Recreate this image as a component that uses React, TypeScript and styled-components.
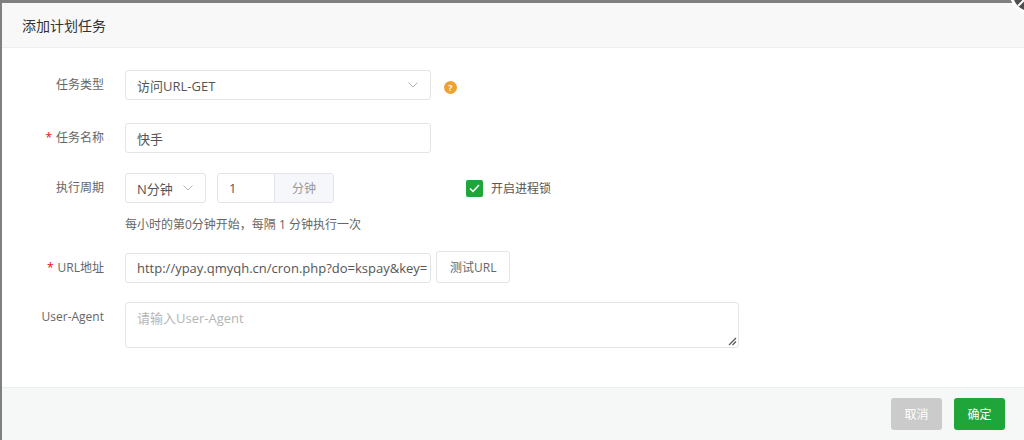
import styled, { createGlobalStyle } from "styled-components";

const GlobalStyle = createGlobalStyle`
  html, body {
    margin: 0;
    padding: 0;
    width: 1024px;
    height: 440px;
    overflow: hidden;
    background: #808080;
    font-family: "Open Sans", "Noto Sans CJK SC", sans-serif;
  }
`;

const Overlay = styled.div`
  position: relative;
  width: 1024px;
  height: 440px;
  padding: 3px 0 0 2px;
  box-sizing: border-box;
  background: #808080;
  overflow: hidden;
`;

const Dialog = styled.div`
  display: flex;
  flex-direction: column;
  height: 100%;
  background: #fff;
`;

const Header = styled.div`
  height: 44px;
  flex: none;
  display: flex;
  align-items: center;
  padding-left: 20px;
  background: #f8f8f8;
  border-bottom: 1px solid #eee;
  font-size: 14px;
  color: #333;
`;

const CloseButton = styled.div`
  position: absolute;
  z-index: 5;
  left: 1010px;
  top: -26px;
  width: 34px;
  height: 34px;
  border-radius: 50%;
  background: #4f4f4f;
  border: 3px solid #fff;
  svg {
    position: absolute;
    left: 4px;
    bottom: 4px;
  }
`;

const Body = styled.div`
  flex: 1;
  padding-top: 22px;
  display: flex;
  flex-direction: column;
`;

const Row = styled.div<{ $gap?: number }>`
  display: flex;
  align-items: flex-start;
  margin-bottom: ${(p) => p.$gap ?? 20}px;
`;

const Label = styled.div`
  width: 102px;
  flex: none;
  text-align: right;
  line-height: 30px;
  font-size: 12px;
  color: #666;
  margin-right: 21px;
`;

const Star = styled.span`
  color: #ef0808;
  margin-right: 4px;
`;

const Field = styled.div`
  display: flex;
  align-items: center;
`;

const Input = styled.div<{ $width: number }>`
  width: ${(p) => p.$width}px;
  height: 30px;
  box-sizing: border-box;
  border: 1px solid #e2e4e8;
  border-radius: 3px;
  padding: 0 11px;
  display: flex;
  align-items: center;
  font-size: 13px;
  color: #555;
  white-space: nowrap;
  overflow: hidden;
`;

const Select = styled(Input)`
  justify-content: space-between;
  padding-right: 12px;
`;

const Chevron = () => (
  <svg width="10" height="6" viewBox="0 0 10 6">
    <path d="M0.5 0.5 L5 5 L9.5 0.5" fill="none" stroke="#b0b3b8" strokeWidth="1" />
  </svg>
);

const Help = styled.div`
  width: 13px;
  height: 13px;
  border-radius: 50%;
  background: #f0a030;
  color: #fff;
  font-size: 9px;
  font-weight: 700;
  line-height: 13px;
  text-align: center;
  margin-left: 13px;
  margin-top: 11px;
`;

const Group = styled.div`
  display: flex;
  height: 30px;
  margin-left: 11px;
  border: 1px solid #e2e4e8;
  border-radius: 3px;
  overflow: hidden;
  box-sizing: border-box;
`;

const GroupInput = styled.div`
  width: 34px;
  padding: 0 11px;
  display: flex;
  align-items: center;
  font-size: 13px;
  color: #555;
`;

const Addon = styled.div`
  width: 58px;
  display: flex;
  align-items: center;
  justify-content: center;
  background: #f5f7fa;
  border-left: 1px solid #e2e4e8;
  font-size: 12px;
  color: #999;
`;

const CheckWrap = styled.label`
  display: flex;
  align-items: center;
  margin-left: 132px;
  font-size: 12px;
  color: #555;
  gap: 8px;
`;

const CheckBox = styled.span`
  width: 17px;
  height: 17px;
  border-radius: 2px;
  background: #20a53a;
  display: flex;
  align-items: center;
  justify-content: center;
`;

const Hint = styled.div`
  margin: 13px 0 19px 123px;
  font-size: 12px;
  color: #666;
  line-height: 18px;
`;

const Button = styled.div`
  height: 32px;
  margin-left: 5px;
  margin-top: -2px;
  padding: 0 13px;
  box-sizing: border-box;
  border: 1px solid #e2e4e8;
  border-radius: 3px;
  display: flex;
  align-items: center;
  font-size: 12px;
  color: #666;
`;

const TextArea = styled.div`
  width: 614px;
  height: 46px;
  box-sizing: border-box;
  border: 1px solid #e2e4e8;
  border-radius: 3px;
  padding: 5px 11px;
  font-size: 13px;
  color: #b5b5b5;
  position: relative;
  svg {
    position: absolute;
    right: 1px;
    bottom: 1px;
  }
`;

const Footer = styled.div`
  height: 52px;
  flex: none;
  display: flex;
  justify-content: flex-end;
  align-items: center;
  gap: 12px;
  padding-right: 19px;
  background: #f6f7f7;
  border-top: 1px solid #eceeee;
`;

const FooterButton = styled.div<{ $primary?: boolean }>`
  width: 51px;
  height: 32px;
  border-radius: 3px;
  display: flex;
  align-items: center;
  justify-content: center;
  font-size: 12px;
  color: #fff;
  background: ${(p) => (p.$primary ? "#20a53a" : "#cbcbcb")};
`;

export default function App() {
  return (
    <>
      <GlobalStyle />
      <Overlay>
        <Dialog>
          <Header>添加计划任务</Header>
          <Body>
            <Row $gap={23}>
              <Label>任务类型</Label>
              <Field>
                <Select $width={306}>
                  访问URL-GET
                  <Chevron />
                </Select>
              </Field>
              <Help>?</Help>
            </Row>
            <Row>
              <Label>
                <Star>*</Star>任务名称
              </Label>
              <Input $width={306}>快手</Input>
            </Row>
            <Row $gap={0}>
              <Label>执行周期</Label>
              <Field>
                <Select $width={81}>
                  N分钟
                  <Chevron />
                </Select>
                <Group>
                  <GroupInput>1</GroupInput>
                  <Addon>分钟</Addon>
                </Group>
                <CheckWrap>
                  <CheckBox>
                    <svg width="11" height="9" viewBox="0 0 11 9">
                      <path d="M1 4.5 L4 7.5 L10 1" fill="none" stroke="#fff" strokeWidth="1.5" />
                    </svg>
                  </CheckBox>
                  开启进程锁
                </CheckWrap>
              </Field>
            </Row>
            <Hint>每小时的第0分钟开始，每隔 1 分钟执行一次</Hint>
            <Row $gap={19}>
              <Label>
                <Star>*</Star>URL地址
              </Label>
              <Input $width={306}>http://ypay.qmyqh.cn/cron.php?do=kspay&amp;key=</Input>
              <Button>测试URL</Button>
            </Row>
            <Row>
              <Label>User-Agent</Label>
              <TextArea>
                请输入User-Agent
                <svg width="10" height="10" viewBox="0 0 10 10">
                  <path d="M9 2 L2 9 M9 5.5 L5.5 9" stroke="#555" strokeWidth="1.2" />
                </svg>
              </TextArea>
            </Row>
          </Body>
          <Footer>
            <FooterButton>取消</FooterButton>
            <FooterButton $primary>确定</FooterButton>
          </Footer>
        </Dialog>
        <CloseButton>
          <svg width="12" height="12" viewBox="0 0 12 12">
            <path d="M1 11 L11 1" stroke="#fff" strokeWidth="2" />
          </svg>
        </CloseButton>
      </Overlay>
    </>
  );
}
